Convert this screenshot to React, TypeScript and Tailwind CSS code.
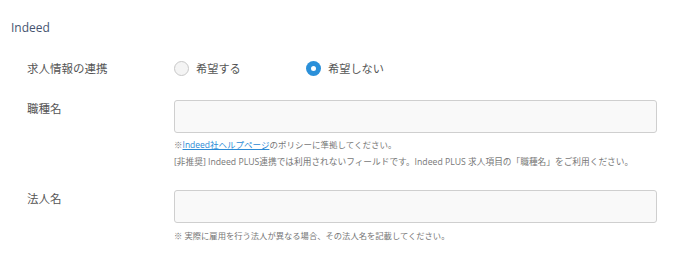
import React from 'react';

const font = { fontFamily: '"Open Sans", "Noto Sans CJK JP", sans-serif' };

function Radio({ label, checked }: { label: string; checked?: boolean }) {
  return (
    <label className="flex items-center gap-[7px] w-[132px]">
      {checked ? (
        <span className="w-[15px] h-[15px] rounded-full bg-[#2b90d9] flex items-center justify-center">
          <span className="w-[5px] h-[5px] rounded-full bg-white" />
        </span>
      ) : (
        <span className="w-[15px] h-[15px] rounded-full bg-[#f4f4f4] border border-[#c8c8c8]" />
      )}
      <span className="text-[11.2px] text-[#555]">{label}</span>
    </label>
  );
}

export default function App() {
  return (
    <div className="w-[678px] h-[258px] bg-white pt-[19px]" style={font}>
      {/* Section title */}
      <h2 className="pl-[11px] text-[12px] leading-[18px] text-[#465470]">Indeed</h2>

      {/* 求人情報の連携 */}
      <div className="flex items-center h-[20px] mt-[22px] pl-[27px]">
        <div className="w-[147px] text-[11.5px] text-[#555]">求人情報の連携</div>
        <div className="flex">
          <Radio label="希望する" />
          <Radio label="希望しない" checked />
        </div>
      </div>

      {/* 職種名 */}
      <div className="flex mt-[21px] pl-[27px] pr-[21px]">
        <div className="w-[147px] shrink-0 pt-[1px] text-[11.5px] leading-[16px] text-[#555]">職種名</div>
        <div className="flex-1">
          <div className="h-[33px] rounded-[3px] border border-[#cfcfcf] bg-[#f9f9f9]" />
          <p className="mt-[4px] text-[8.5px] leading-[16.5px] text-[#777]">
            ※<a className="text-[#2b8ad6] underline">Indeed社ヘルプページ</a>のポリシーに準拠してください。
          </p>
          <p className="text-[8.7px] leading-[16.5px] text-[#777]">
            [非推奨] Indeed PLUS連携では利用されないフィールドです。Indeed PLUS 求人項目の「職種名」をご利用ください。
          </p>
        </div>
      </div>

      {/* 法人名 */}
      <div className="flex mt-[20px] pl-[27px] pr-[21px]">
        <div className="w-[147px] shrink-0 pt-[1px] text-[11.5px] leading-[16px] text-[#555]">法人名</div>
        <div className="flex-1">
          <div className="h-[33px] rounded-[3px] border border-[#cfcfcf] bg-[#f9f9f9]" />
          <p className="mt-[5px] text-[8.3px] leading-[16px] text-[#777]">
            ※ 実際に雇用を行う法人が異なる場合、その法人名を記載してください。
          </p>
        </div>
      </div>
    </div>
  );
}
